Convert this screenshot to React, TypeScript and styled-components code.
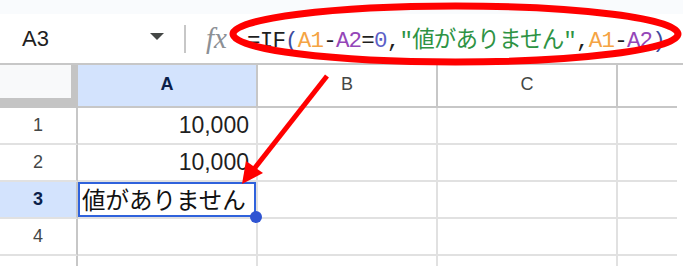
import React from "react";
import styled, { createGlobalStyle } from "styled-components";

const Global = createGlobalStyle`
  html, body { margin: 0; padding: 0; background: #fff; }
  body { font-family: "Liberation Sans", Arial, sans-serif; }
`;

const Page = styled.div`
  position: relative;
  width: 683px;
  height: 266px;
  overflow: hidden;
  background: #fff;
`;

const TopStrip = styled.div`
  height: 14px;
  background: #f9fbfd;
`;

const FormulaBar = styled.div`
  display: flex;
  align-items: center;
  height: 49px;
  border-bottom: 2px solid #c7c7c7;
  & > * {
    flex-shrink: 0;
  }
`;

const NameBox = styled.div`
  width: 128px;
  padding-left: 22px;
  font-size: 22px;
  color: #1f1f1f;
`;

const Caret = styled.div`
  width: 0;
  height: 0;
  border-left: 7.5px solid transparent;
  border-right: 7.5px solid transparent;
  border-top: 7px solid #444746;
  margin-bottom: 4px;
`;

const Divider = styled.div`
  margin-left: 20px;
  width: 2px;
  height: 28px;
  background: #c7c7c7;
`;

const Fx = styled.div`
  margin-left: 20px;
  width: 27px;
  font-family: "Liberation Serif", serif;
  font-style: italic;
  font-size: 29px;
  color: #8c9095;
`;

const Formula = styled.div`
  margin-left: 14px;
  margin-bottom: 2px;
  font-family: "Liberation Mono", "Noto Sans CJK JP", monospace;
  font-size: 22.5px;
  letter-spacing: -0.8px;
  white-space: nowrap;
  color: #1f1f1f;
`;

const Token = styled.span<{ $color: string }>`
  color: ${(p) => p.$color};
`;

const Sheet = styled.div`
  display: grid;
  grid-template-columns: 78px 180px 180px 180px 59px;
  grid-template-rows: 43px repeat(5, 37px);
  width: 677px;
`;

const Corner = styled.div`
  box-sizing: border-box;
  background: #f8f9fa;
  border-right: 7px solid #c4c4c4;
  border-bottom: 10px solid #c4c4c4;
`;

const ColHeader = styled.div<{ $active?: boolean; $last?: boolean }>`
  box-sizing: border-box;
  display: flex;
  align-items: center;
  justify-content: center;
  font-size: 18px;
  padding-bottom: 2px;
  background: ${(p) => (p.$active ? "#d3e3fd" : "#fff")};
  color: ${(p) => (p.$active ? "#0b1f4a" : "#444746")};
  font-weight: ${(p) => (p.$active ? 700 : 400)};
  border-right: ${(p) => (p.$last ? "none" : "2px solid #c7c7c7")};
  border-bottom: 2px solid #c7c7c7;
`;

const RowHeader = styled.div<{ $active?: boolean }>`
  box-sizing: border-box;
  display: flex;
  align-items: center;
  justify-content: center;
  font-size: 18px;
  background: ${(p) => (p.$active ? "#d3e3fd" : "#fff")};
  color: ${(p) => (p.$active ? "#0b1f4a" : "#444746")};
  font-weight: ${(p) => (p.$active ? 700 : 400)};
  border-right: 2px solid #c7c7c7;
  border-bottom: 2px solid #e1e1e1;
`;

const Cell = styled.div<{ $align?: "left" | "right"; $last?: boolean; $selected?: boolean }>`
  box-sizing: border-box;
  position: ${(p) => (p.$selected ? "relative" : "static")};
  display: flex;
  align-items: center;
  justify-content: ${(p) => (p.$align === "right" ? "flex-end" : "flex-start")};
  padding: 0 7px 0 4px;
  font-size: 23px;
  color: #1f1f1f;
  white-space: nowrap;
  border-right: ${(p) => (p.$last ? "none" : "2px solid #e1e1e1")};
  border-bottom: 2px solid #e1e1e1;
  &::after {
    content: "";
    display: ${(p) => (p.$selected ? "block" : "none")};
    position: absolute;
    inset: 0;
    border: 2px solid #2f62dc;
  }
`;

const JaText = styled.span`
  font-family: "Noto Sans CJK JP", sans-serif;
  font-size: 23.5px;
  line-height: 1;
  color: #111;
`;

const Handle = styled.div`
  position: absolute;
  right: -6px;
  bottom: -6px;
  width: 12px;
  height: 12px;
  border-radius: 50%;
  background: #2f54d2;
  z-index: 2;
`;

const Overlay = styled.svg`
  position: absolute;
  top: 0;
  left: 0;
  pointer-events: none;
  z-index: 5;
`;

const ORANGE = "#f5a443";
const PURPLE = "#9446b8";
const DARK = "#1f1f1f";
const PAREN = "#3c4a9e";
const NUM = "#5b5fc7";
const GREEN = "#2e9344";

const cols = ["A", "B", "C", ""];

export default function App() {
  const rows: { n: number; a: React.ReactNode; right?: boolean; sel?: boolean }[] = [
    { n: 1, a: "10,000", right: true },
    { n: 2, a: "10,000", right: true },
    { n: 3, a: <JaText>値がありません</JaText>, sel: true },
    { n: 4, a: "" },
    { n: 5, a: "" },
  ];
  return (
    <Page>
      <Global />
      <TopStrip />
      <FormulaBar>
        <NameBox>A3</NameBox>
        <Caret />
        <Divider />
        <Fx>fx</Fx>
        <Formula>
          <Token $color={DARK}>=IF</Token>
          <Token $color={PAREN}>(</Token>
          <Token $color={ORANGE}>A1</Token>
          <Token $color={DARK}>-</Token>
          <Token $color={PURPLE}>A2</Token>
          <Token $color={DARK}>=</Token>
          <Token $color={NUM}>0</Token>
          <Token $color={DARK}>,</Token>
          <Token $color={GREEN}>"値がありません"</Token>
          <Token $color={DARK}>,</Token>
          <Token $color={ORANGE}>A1</Token>
          <Token $color={DARK}>-</Token>
          <Token $color={PURPLE}>A2</Token>
          <Token $color={PAREN}>)</Token>
        </Formula>
      </FormulaBar>
      <Sheet>
        <Corner />
        {cols.map((c, i) => (
          <ColHeader key={i} $active={c === "A"} $last={i === cols.length - 1}>
            {c}
          </ColHeader>
        ))}
        {rows.map((r) => (
          <React.Fragment key={r.n}>
            <RowHeader $active={r.sel}>{r.n <= 4 ? r.n : ""}</RowHeader>
            <Cell $align={r.right ? "right" : "left"} $selected={r.sel}>
              {r.a}
              {r.sel && <Handle />}
            </Cell>
            <Cell />
            <Cell />
            <Cell $last />
          </React.Fragment>
        ))}
      </Sheet>
      <Overlay width={683} height={266} viewBox="0 0 683 266">
        <ellipse cx={455.5} cy={34} rx={222.5} ry={28} fill="none" stroke="#ff0000" strokeWidth={7} />
        <line x1={327} y1={76} x2={254} y2={169} stroke="#ff0000" strokeWidth={5} />
        <polygon points="242,184 246,161 263,173" fill="#ff0000" />
      </Overlay>
    </Page>
  );
}
